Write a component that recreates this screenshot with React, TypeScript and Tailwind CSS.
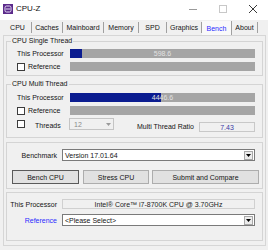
import React from "react";

const Checkbox = () => (
  <span className="block w-[8px] h-[8px] shrink-0 border border-[#3c3c3c] bg-white" />
);

const DropArrow = ({ disabled }: { disabled?: boolean }) => (
  <svg width="5" height="3" viewBox="0 0 5 3">
    <polygon points="0,0 5,0 2.5,3" fill={disabled ? "#9a9a9a" : "#000"} />
  </svg>
);

const Bar = ({ pct, value }: { pct: number; value?: string }) => (
  <div className="relative flex-1 h-[9px] bg-[#a5a5a5]">
    <div className="h-full bg-[#0b1c90]" style={{ width: `${pct}%` }} />
    {value && (
      <span className="absolute inset-0 flex items-center justify-center text-[#e2e2e2]">
        {value}
      </span>
    )}
  </div>
);

const GroupTitle = ({ children }: { children: React.ReactNode }) => (
  <span className="absolute left-[4px] top-[-5px] bg-[#f0f0f0] px-[1px] leading-[8px]">
    {children}
  </span>
);

const Select = ({ text }: { text: string }) => (
  <div className="flex flex-1 h-[12px] items-center border border-[#7a7a7a] bg-white pl-[2px] pr-[1px]">
    <span className="flex-1">{text}</span>
    <span className="flex w-[9px] h-[9px] items-center justify-center border border-[#a8a8a8] bg-[#ececec]">
      <DropArrow />
    </span>
  </div>
);

const tabs: { name: string; w: string; active?: boolean }[] = [
  { name: "CPU", w: "w-[28px]" },
  { name: "Caches", w: "w-[31px]" },
  { name: "Mainboard", w: "w-[41px]" },
  { name: "Memory", w: "w-[35px]" },
  { name: "SPD", w: "w-[28px]" },
  { name: "Graphics", w: "w-[35px]" },
  { name: "Bench", w: "w-[30px]", active: true },
  { name: "About", w: "w-[26px]" },
];

export default function App() {
  return (
    <div className="w-[268px] h-[250px] overflow-hidden bg-[#f0f0f0] text-[7px] leading-none text-[#141414] font-['Liberation_Sans',Arial,sans-serif]">
      {/* Title bar */}
      <div className="flex h-[20px] items-center bg-white pb-[2px]">
        <svg className="ml-[3px]" width="10" height="10" viewBox="0 0 10 10">
          <rect width="10" height="10" fill="#5b2a8a" />
          <rect x="2" y="2" width="6" height="6" rx="1.5" fill="none" stroke="#e6dcf5" strokeWidth="1" />
          <line x1="3" y1="5" x2="7" y2="5" stroke="#e6dcf5" strokeWidth="1" />
        </svg>
        <span className="ml-[3px] text-[8px] text-[#111]">CPU-Z</span>
        <div className="flex-1" />
        <div className="flex w-[30px] justify-center">
          <svg width="8" height="8" viewBox="0 0 8 8">
            <line x1="0" y1="4.5" x2="8" y2="4.5" stroke="#9a9a9a" strokeWidth="1" />
          </svg>
        </div>
        <div className="flex w-[30px] justify-center">
          <svg width="8" height="8" viewBox="0 0 8 8">
            <rect x="0.5" y="0.5" width="7" height="7" fill="none" stroke="#c8c8c8" strokeWidth="1" />
          </svg>
        </div>
        <div className="flex w-[30px] justify-center">
          <svg width="8" height="8" viewBox="0 0 8 8">
            <line x1="0" y1="0" x2="8" y2="8" stroke="#222" strokeWidth="0.9" />
            <line x1="8" y1="0" x2="0" y2="8" stroke="#222" strokeWidth="0.9" />
          </svg>
        </div>
      </div>

      {/* Tabs */}
      <div className="flex h-[15px] pl-[4px] pt-[1px]">
        {tabs.map((t) => (
          <div
            key={t.name}
            className={`${t.w} flex items-center justify-center border-r border-[#a0a0a0] ${
              t.active ? "h-[14px] bg-[#f9f9f9] text-[#2a2aff]" : "mt-[1px] h-[11px]"
            }`}
          >
            {t.name}
          </div>
        ))}
      </div>

      {/* Panel */}
      <div className="ml-[3px] mr-[2px] h-[211px] border border-[#d6d6d6] px-[2px] pt-[5px]">
        {/* CPU Single Thread */}
        <div className="relative h-[35px] border border-[#d4d4d4] pl-[10px] pr-[7px] pt-[7px]">
          <GroupTitle>CPU Single Thread</GroupTitle>
          <div className="flex flex-col gap-[4px]">
            <div className="flex h-[9px] items-center">
              <span className="w-[53px]">This Processor</span>
              <Bar pct={6.3} value="598.6" />
            </div>
            <div className="flex h-[9px] items-center">
              <div className="flex w-[53px] items-center">
                <Checkbox />
                <span className="ml-[3px]">Reference</span>
              </div>
              <Bar pct={0} />
            </div>
          </div>
        </div>

        {/* CPU Multi Thread */}
        <div className="relative mt-[8px] h-[54px] border border-[#d4d4d4] pl-[10px] pr-[7px] pt-[8px]">
          <GroupTitle>CPU Multi Thread</GroupTitle>
          <div className="flex flex-col gap-[4px]">
            <div className="flex h-[9px] items-center">
              <span className="w-[53px]">This Processor</span>
              <Bar pct={49} value="4446.6" />
            </div>
            <div className="flex h-[9px] items-center">
              <div className="flex w-[53px] items-center">
                <Checkbox />
                <span className="ml-[3px]">Reference</span>
              </div>
              <Bar pct={0} />
            </div>
          </div>
          <div className="mt-[3px] flex h-[14px] items-start">
            <div className="mt-[2px]">
              <Checkbox />
            </div>
            <span className="ml-[10px] mt-[4px] w-[34px] leading-[8px]">Threads</span>
            <div className="flex w-[45px] h-[12px] items-center border border-[#c4c4c4] bg-[#f0f0f0] pl-[4px] pr-[2px] text-[#8a8a8a]">
              <span className="flex-1">12</span>
              <DropArrow disabled />
            </div>
            <span className="mt-[5px] flex-1 pr-[5px] text-right leading-[8px]">Multi Thread Ratio</span>
            <div className="mt-[4px] flex w-[56px] h-[10px] items-center justify-center border border-[#c8c8c8] text-[#3a3aa6]">
              7.43
            </div>
          </div>
        </div>

        {/* Benchmark */}
        <div className="relative mt-[4px] h-[47px] border border-[#d4d4d4] pt-[6px]">
          <div className="mr-[7px] flex h-[12px] items-center">
            <span className="w-[50px] text-right">Benchmark</span>
            <div className="ml-[5px] flex flex-1">
              <Select text="Version 17.01.64" />
            </div>
          </div>
          <div className="ml-[5px] mt-[9px] flex h-[14px]">
            <button className="w-[67px] h-[14px] border border-[#5a5a5a] bg-[#e1e1e1] text-[#141414]">
              Bench CPU
            </button>
            <button className="ml-[4px] w-[66px] h-[14px] border border-[#adadad] bg-[#e1e1e1] text-[#141414]">
              Stress CPU
            </button>
            <button className="ml-[3px] w-[107px] h-[14px] border border-[#adadad] bg-[#e1e1e1] text-[#141414]">
              Submit and Compare
            </button>
          </div>
        </div>

        {/* Processor / Reference */}
        <div className="relative mt-[3px] h-[49px] border border-[#d4d4d4] pt-[6px] pr-[7px]">
          <div className="flex h-[10px] items-center">
            <span className="w-[50px] text-right">This Processor</span>
            <div className="ml-[5px] flex flex-1 h-[10px] items-center justify-center border border-[#d0d0d0] text-[#222]">
              Intel® Core™ i7-8700K CPU @ 3.70GHz
            </div>
          </div>
          <div className="mt-[5px] flex h-[12px] items-center">
            <span className="w-[50px] text-right text-[#2b2bff]">Reference</span>
            <div className="ml-[5px] flex flex-1">
              <Select text="<Please Select>" />
            </div>
          </div>
        </div>
      </div>
    </div>
  );
}
